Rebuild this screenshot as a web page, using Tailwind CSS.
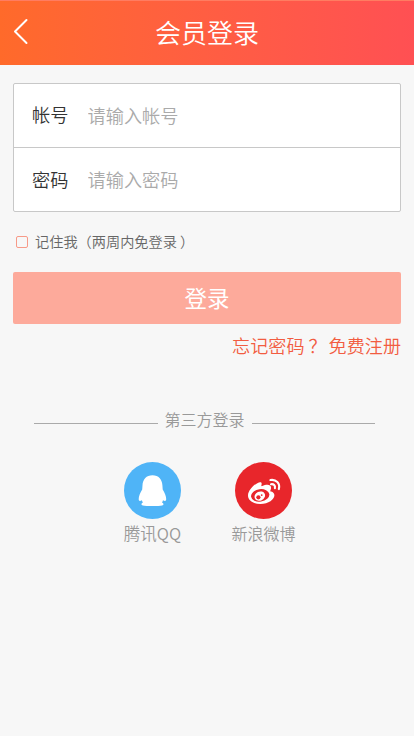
<!DOCTYPE html>
<html lang="zh-CN">
<head>
<meta charset="utf-8">
<meta name="viewport" content="width=device-width, initial-scale=1">
<title>会员登录</title>
<script src="https://cdn.jsdelivr.net/npm/@tailwindcss/browser@4"></script>
</head>
<body class="min-h-screen bg-[#f7f7f7] font-['Noto_Sans_CJK_SC',sans-serif] font-[350]">
<header class="grid h-[65px] grid-cols-[48px_1fr_48px] items-center border-t border-[#ff7c61] bg-linear-to-r from-[#ff6a2a] to-[#ff5053]">
  <a href="#" aria-label="返回" class="pl-3">
    <svg class="-mt-1 h-7 w-5" viewBox="0 0 20 28" fill="none" stroke="#fff" stroke-width="2" stroke-linecap="round" stroke-linejoin="round"><path d="M14.5 3 3 14.5 14.5 26"/></svg>
  </a>
  <h1 class="pb-[2px] text-center text-[26px] leading-[62px] text-white">会员登录</h1>
</header>
<main class="px-[13px] pt-[18px]">
  <form>
    <div class="rounded-[2px] border border-[#c8c8c8] bg-white text-[18.2px]">
      <label class="flex h-[64px] items-center border-b border-[#c8c8c8] pb-[1px] pl-[18px] text-[#333]">
        <span class="w-[55.5px]">帐号</span>
        <input type="text" placeholder="请输入帐号" class="h-10 min-w-0 flex-1 pb-[1px] outline-none placeholder:text-[#aaa]">
      </label>
      <label class="flex h-[63px] items-center pl-[18px] text-[#333]">
        <span class="w-[55.5px]">密码</span>
        <input type="password" placeholder="请输入密码" class="h-10 min-w-0 flex-1 pb-[1px] outline-none placeholder:text-[#aaa]">
      </label>
    </div>
    <label class="flex h-[60px] items-center pl-[3px] text-[14.2px] text-[#666]">
      <input type="checkbox" class="mr-[7px] size-[12px] appearance-none rounded-[2px] border border-[#f79a88]">
      <span>记住我（两周内免登录<span class="pl-[3px]">）</span></span>
    </label>
    <button type="button" class="block h-[52px] w-full rounded-[2px] bg-[#fdaa9b] text-[22.5px] font-normal text-white">登录</button>
    <div class="flex h-[44px] items-center justify-end text-[18.1px] text-[#f25c41]">
      <a href="#">忘记密码<span class="inline-block translate-x-[4px]">？</span></a>
      <a href="#" class="ml-[6px]">免费注册</a>
    </div>
  </form>
  <section class="mt-[41px]">
    <div class="flex h-6 items-center gap-[7px] pr-[26px] pl-[21px] text-[16px] text-[#999]">
      <span class="mt-[5px] h-px flex-1 bg-[#aaa]"></span>
      <h2 class="pb-[4px]">第三方登录</h2>
      <span class="mt-[5px] h-px flex-1 bg-[#aaa]"></span>
    </div>
    <div class="mt-[29px] flex pl-[100px] text-[16px] text-[#999]">
      <a href="#" class="flex w-[79px] flex-col items-center">
        <svg class="size-[57px]" viewBox="0 0 57 57"><circle cx="28.5" cy="28.5" r="28.5" fill="#4fb4f7"/><path fill="#fff" d="M28.5 13.3c-6.2 0-9.6 4-10 10l-.3 4.2c-2 3.2-3.6 6.9-3.5 9.8.1 1.8 1.2 2.1 3.2.9.2.8.6 1.7 1 2.4-1 .5-1.5 1.1-1.5 1.7 0 1.3 2.2 1.7 5.3 1.7h11.6c3.1 0 5.2-.4 5.2-1.7 0-.6-.5-1.2-1.5-1.7.4-.7.8-1.6 1-2.4 2 1.2 3.1.9 3.2-.9.1-2.9-1.5-6.6-3.5-9.8l-.3-4.2c-.4-6-3.8-10-9.9-10Z"/></svg>
        <span class="mt-[2px] text-[16.5px] leading-6">腾讯QQ</span>
      </a>
      <a href="#" class="ml-8 flex w-[79px] flex-col items-center">
        <svg class="size-[57px]" viewBox="0 0 57 57"><circle cx="28.5" cy="28.5" r="28.5" fill="#e8262b"/><path fill="#fff" d="M36.2 29.6c-.8-.2-1.1-.4-.8-1.1.9-2.1.9-3.8-.1-4.7-1.6-1.6-4.9-1.2-8.1.3-.7.3-1-.1-.8-.8.5-1.7.3-2.6-.5-3-2.8-1.4-12.9 6.7-12.9 13.3 0 5.3 5.8 8.5 12.4 8.5 8.2 0 14-4.7 14-8.8 0-1.7-1.2-3.1-3.2-3.7Z"/><ellipse cx="25.2" cy="33.4" rx="9.2" ry="6.2" fill="#e8262b" transform="rotate(-8 25.2 33.4)"/><ellipse cx="24.8" cy="34.1" rx="5.4" ry="4.5" fill="#fff" transform="rotate(-25 24.8 34.1)"/><circle cx="23.4" cy="35.3" r="2.1" fill="#e8262b"/><circle cx="26.7" cy="33.1" r=".9" fill="#e8262b"/><g fill="none" stroke="#fff" stroke-width="2.1" stroke-linecap="round"><path d="M35.4 18c5.6-1 10.1 3.5 8.4 9.1"/><path d="M36 22.2c2.7-.5 4.5 1.4 3.9 4"/></g></svg>
        <span class="mt-[2px] leading-6">新浪微博</span>
      </a>
    </div>
  </section>
</main>
</body>
</html>
